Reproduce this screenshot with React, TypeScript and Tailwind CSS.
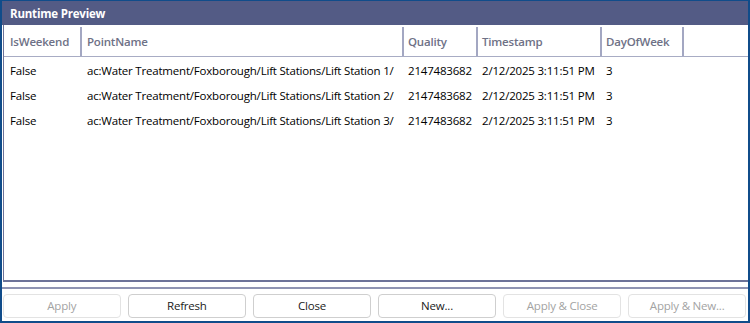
const columns = [
  { name: "IsWeekend", width: "w-[78px]", pad: "pl-[6px]" },
  { name: "PointName", width: "w-[322px]", pad: "pl-[5px]" },
  { name: "Quality", width: "w-[74px]", pad: "pl-[4px]" },
  { name: "Timestamp", width: "w-[124px]", pad: "pl-[4px]" },
  { name: "DayOfWeek", width: "w-[82px]", pad: "pl-[4px]" },
];

const rows = [1, 2, 3].map((n) => [
  "False",
  `ac:Water Treatment/Foxborough/Lift Stations/Lift Station ${n}/`,
  "2147483682",
  "2/12/2025 3:11:51 PM",
  "3",
]);

const buttons = [
  { label: "Apply", disabled: true },
  { label: "Refresh", disabled: false },
  { label: "Close", disabled: false },
  { label: "New...", disabled: false },
  { label: "Apply & Close", disabled: true },
  { label: "Apply & New...", disabled: true },
];

export default function App() {
  return (
    <div
      className="w-[750px] h-[323px] border-2 border-t border-[#104c8a] bg-white flex flex-col text-[11.5px] tracking-[-0.2px] text-black overflow-hidden"
      style={{ fontFamily: '"Open Sans", "Noto Sans", sans-serif' }}
    >
      {/* title bar */}
      <div className="h-[24px] shrink-0 bg-[#535b85] text-white font-bold px-[8px] pt-[2px] flex items-center">
        Runtime Preview
      </div>

      {/* grid */}
      <div className="h-[257px] shrink-0 ml-px border-l border-b-2 border-[#6d7399] flex flex-col">
        <div className="h-[32px] shrink-0 flex border-b border-[#a8acc4] text-[#6e7186] font-semibold pt-[2px]">
          {columns.map((c) => (
            <div
              key={c.name}
              className={`${c.width} ${c.pad} shrink-0 border-r-2 border-[#a3a7c2] flex items-center`}
            >
              {c.name}
            </div>
          ))}
        </div>
        {rows.map((r, i) => (
          <div key={i} className="h-[25px] shrink-0 flex pt-[3px]">
            {r.map((cell, j) => (
              <div
                key={j}
                className={`${columns[j].width} ${columns[j].pad} shrink-0 flex items-center whitespace-nowrap overflow-hidden`}
              >
                {cell}
              </div>
            ))}
          </div>
        ))}
      </div>

      {/* separator */}
      <div className="mt-[5px] h-[2px] shrink-0 bg-[#8f94b3]" />

      {/* buttons */}
      <div className="flex gap-[7.5px] pl-[1px] pr-[2px] pt-[5px]">
        {buttons.map((b) => (
          <button
            key={b.label}
            disabled={b.disabled}
            className={`flex-1 h-[24px] rounded-[4px] border bg-white flex items-center justify-center ${
              b.disabled
                ? "border-[#e3e3e3] text-[#a3a3a3]"
                : "border-[#cfcfcf] text-[#1a1a1a]"
            }`}
          >
            {b.label}
          </button>
        ))}
      </div>
    </div>
  );
}
